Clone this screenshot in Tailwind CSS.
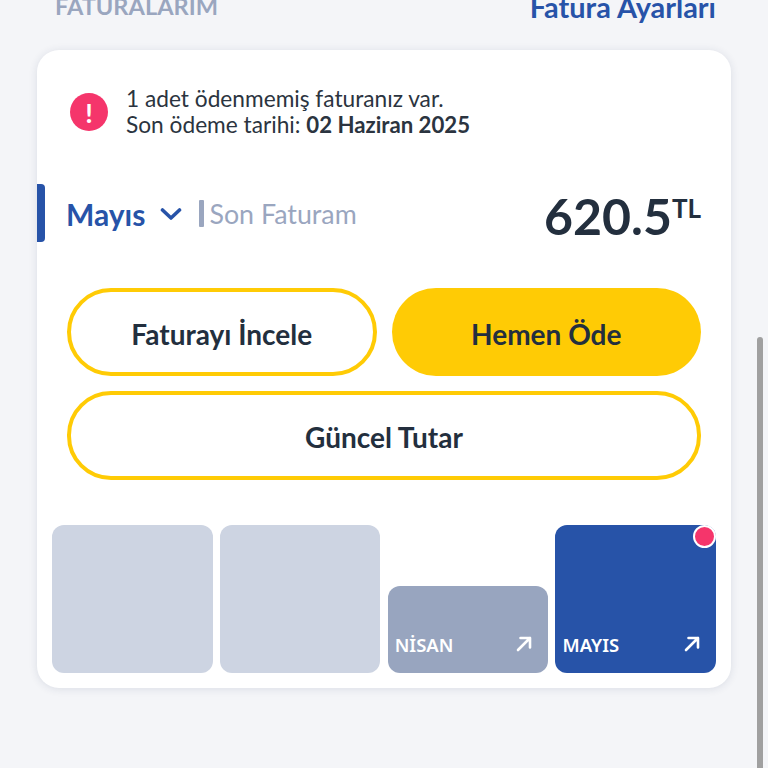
<!DOCTYPE html>
<html lang="tr">
<head>
<meta charset="utf-8">
<script src="https://cdn.jsdelivr.net/npm/@tailwindcss/browser@4"></script>
</head>
<body class="m-0 h-[768px] w-[768px] overflow-hidden bg-[#f4f5f8] font-['Lato','Noto_Sans',sans-serif] text-[#232f3e]">
<div class="relative h-[768px] w-[768px] overflow-hidden">
  <header class="mx-[52px] -mt-[8px] flex h-[30px] items-center justify-between pl-[3px]">
    <span class="text-[23.6px] font-bold text-[#9aa6bf]">FATURALARIM</span>
    <span class="text-[28.9px] font-bold text-[#2753a8]">Fatura Ayarları</span>
  </header>
  <main class="mx-[37px] mt-[28px] h-[638px] w-[694px] rounded-[22px] bg-white shadow-[0_1px_8px_rgba(30,50,90,0.12)]">
    <div class="flex items-center gap-[18px] pl-[33px] pt-[36px]">
      <span class="flex h-[38px] w-[38px] items-center justify-center rounded-full bg-[#f5356b] text-[27px] font-bold leading-none text-white">!</span>
      <p class="text-[22.7px] leading-[26px] text-[#2b3440]">1 adet ödenmemiş faturanız var.<br>Son ödeme tarihi: <b class="text-[22.2px] font-bold">02 Haziran 2025</b></p>
    </div>
    <div class="mt-[46px] flex h-[58px] items-center">
      <span class="h-[58px] w-[8px] rounded-r-[4px] bg-[#2753a8]"></span>
      <span class="ml-[22px] mt-[3px] -translate-x-px text-[30px] font-bold text-[#2753a8]">Mayıs</span>
      <svg class="ml-[14px] mt-[2px] h-[14px] w-[22px]" viewBox="0 0 22 14" fill="none" stroke="#2753a8" stroke-width="3.6" stroke-linecap="round" stroke-linejoin="round"><path d="M2.5 3l8.5 8 8.5-8"/></svg>
      <span class="ml-[17px] h-[27px] w-[5px] rounded-[1px] bg-[#9aa6bf]"></span>
      <span class="ml-[5px] mt-[2px] text-[26.8px] text-[#9aa6bf]">Son Faturam</span>
      <span class="ml-auto mr-[30px] mt-[6px] flex items-start font-bold">
        <span class="text-[50px] leading-none">620.5</span>
        <span class="mt-[4px] text-[26px] leading-none">TL</span>
      </span>
    </div>
    <div class="mx-[30px] mt-[46px] grid grid-cols-2 gap-x-[15px] gap-y-[15px]">
      <button class="h-[88px] rounded-[44px] border-[4px] border-[#ffcb05] bg-white pt-[3px] text-[28px] font-bold">Faturayı İncele</button>
      <button class="h-[88px] rounded-[44px] bg-[#ffcb05] pt-[3px] text-[28px] font-bold">Hemen Öde</button>
      <button class="col-span-2 h-[89px] rounded-[44px] border-[4px] border-[#ffcb05] bg-white pt-[3px] text-[28px] font-bold">Güncel Tutar</button>
    </div>
    <div class="mx-[15px] mt-[45px] grid h-[148px] grid-cols-4 items-end gap-[7.3px] font-['Noto_Sans',sans-serif] text-[18.5px] font-semibold text-white">
      <div class="h-[148px] rounded-[12px] bg-[#cdd4e2]"></div>
      <div class="h-[148px] rounded-[12px] bg-[#cdd4e2]"></div>
      <div class="flex h-[87px] items-end justify-between rounded-[12px] bg-[#98a5bf] pb-[16px] pl-[7px] pr-[16px]">
        <span class="leading-[24px]">NİSAN</span>
        <svg class="mb-[5px] h-[16px] w-[16px]" viewBox="0 0 16 16" fill="none" stroke="#fff" stroke-width="2.6" stroke-linecap="round" stroke-linejoin="round"><path d="M2 14L14 2M4.5 2H14v9.5"/></svg>
      </div>
      <div class="relative flex h-[148px] items-end justify-between rounded-[12px] bg-[#2753a8] pb-[16px] pl-[7px] pr-[16px]">
        <span class="leading-[24px]">MAYIS</span>
        <svg class="mb-[5px] h-[16px] w-[16px]" viewBox="0 0 16 16" fill="none" stroke="#fff" stroke-width="2.6" stroke-linecap="round" stroke-linejoin="round"><path d="M2 14L14 2M4.5 2H14v9.5"/></svg>
        <span class="absolute right-0 top-0 h-[23px] w-[23px] rounded-full border-2 border-white bg-[#f5356b]"></span>
      </div>
    </div>
  </main>
  <div class="absolute bottom-0 left-[757px] top-[337px] w-[6px] rounded-t-[3px] bg-[#a0a0a0]"></div>
</div>
</body>
</html>
